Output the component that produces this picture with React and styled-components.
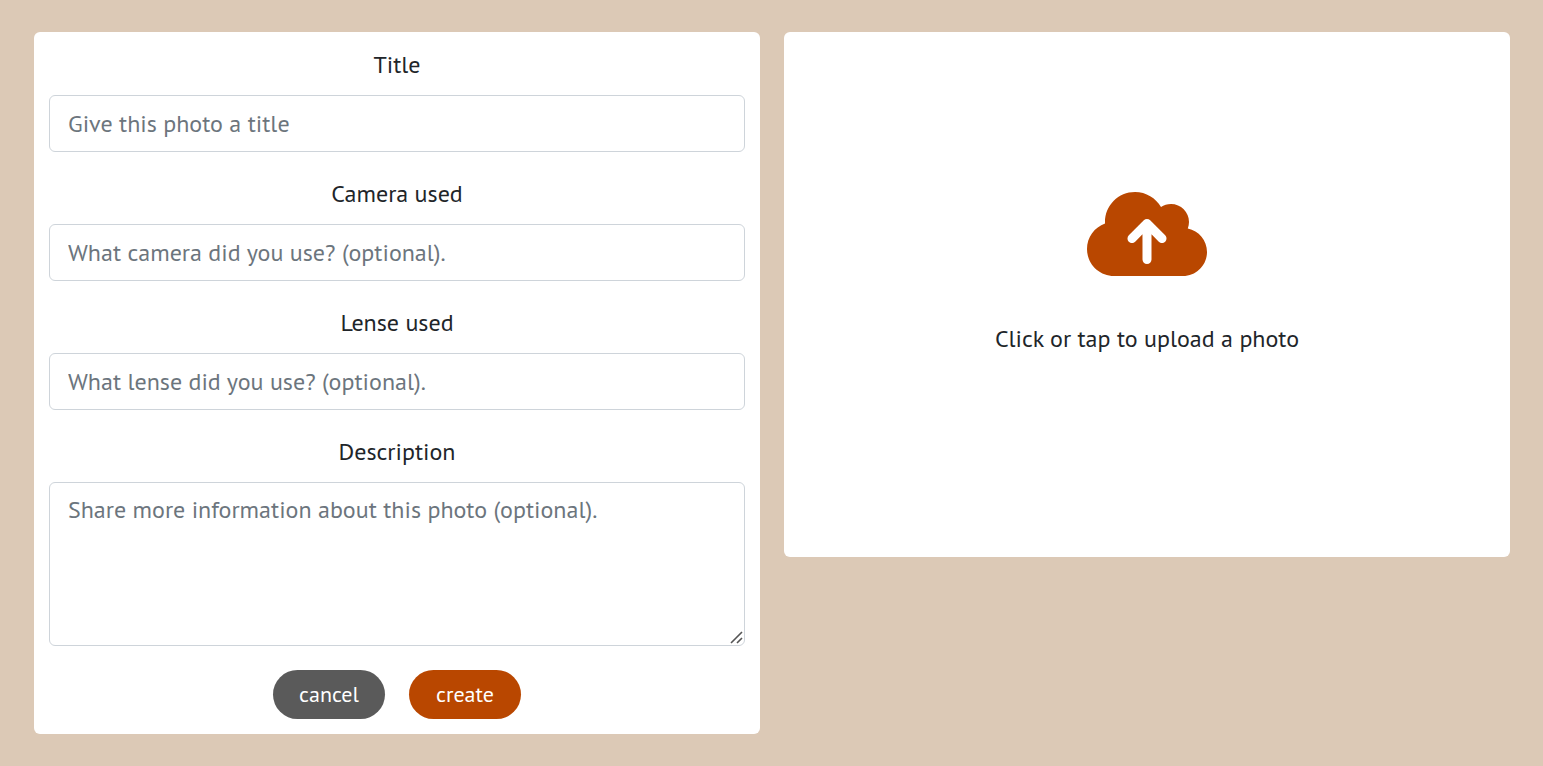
import React from "react";
import styled, { createGlobalStyle } from "styled-components";
import { FaCloudArrowUp } from "react-icons/fa6";

const GlobalStyle = createGlobalStyle`
  *, *::before, *::after { box-sizing: border-box; }
  body {
    margin: 0;
    background: #dcc9b6;
    color: #212529;
    font-family: "PT Sans", Lato, sans-serif;
    font-size: 24px;
    line-height: 36px;
  }
`;

const Page = styled.main`
  display: grid;
  grid-template-columns: repeat(2, minmax(0, 1fr));
  align-items: start;
  gap: 24px;
  padding: 32px 33px 32px 34px;
`;

const FormCard = styled.form`
  display: flex;
  flex-direction: column;
  gap: 24px;
  padding: 15px;
  border-radius: 6px;
  background: #fff;
`;

const Field = styled.div`
  position: relative;
  display: flex;
  flex-direction: column;
  gap: 12px;
  text-align: center;
`;

const TextInput = styled.input`
  display: block;
  width: 100%;
  height: 57px;
  padding: 10px 18px;
  border: 1px solid #ced4da;
  border-radius: 6px;
  background: #fff;
  color: #212529;
  font: inherit;

  &::placeholder {
    color: #6c757d;
    opacity: 1;
  }
`;

const TextArea = styled(TextInput).attrs({ as: "textarea" })`
  height: 164px;
  padding: 9px 18px;
  resize: vertical;

  &::-webkit-resizer {
    background: transparent;
  }
`;

const ResizeGrip = styled.svg`
  position: absolute;
  right: 2px;
  bottom: 2px;
  width: 13px;
  height: 13px;
  pointer-events: none;
`;

const Actions = styled.div`
  display: flex;
  justify-content: center;
  gap: 24px;
`;

const PillButton = styled.button`
  min-width: 112px;
  height: 49px;
  padding: 0 24px 2px;
  border: 0;
  border-radius: 25px;
  background: ${(p) => (p.$primary ? "#b94700" : "#5a5a5a")};
  color: #fff;
  font: inherit;
  font-size: 22px;
  cursor: pointer;
`;

const UploadCard = styled.label`
  position: relative;
  display: flex;
  flex-direction: column;
  align-items: center;
  gap: 39px;
  padding: 154px 15px 200px;
  border-radius: 6px;
  background: #fff;
  text-align: center;
  cursor: pointer;
`;

const UploadIcon = styled(FaCloudArrowUp)`
  width: 120px;
  height: 96px;
  color: #b94700;
`;

const FileInput = styled.input`
  position: absolute;
  inset: 0;
  width: 100%;
  height: 100%;
  opacity: 0;
  cursor: pointer;
`;

const fields = [
  { id: "title", label: "Title", placeholder: "Give this photo a title" },
  { id: "camera", label: "Camera used", placeholder: "What camera did you use? (optional)." },
  { id: "lense", label: "Lense used", placeholder: "What lense did you use? (optional)." },
];

export default function App() {
  return (
    <>
      <GlobalStyle />
      <Page>
        <FormCard onSubmit={(e) => e.preventDefault()}>
          {fields.map(({ id, label, placeholder }) => (
            <Field key={id}>
              <label htmlFor={id}>{label}</label>
              <TextInput id={id} name={id} type="text" placeholder={placeholder} />
            </Field>
          ))}
          <Field>
            <label htmlFor="description">Description</label>
            <TextArea
              id="description"
              name="description"
              placeholder="Share more information about this photo (optional)."
            />
            <ResizeGrip viewBox="0 0 13 13" aria-hidden="true">
              <path d="M1 12L12 1M7 12L12 7" fill="none" stroke="#555" strokeWidth="1.6" />
            </ResizeGrip>
          </Field>
          <Actions>
            <PillButton type="button">cancel</PillButton>
            <PillButton type="submit" $primary>create</PillButton>
          </Actions>
        </FormCard>
        <UploadCard>
          <UploadIcon aria-hidden="true" />
          <span>Click or tap to upload a photo</span>
          <FileInput type="file" accept="image/*" />
        </UploadCard>
      </Page>
    </>
  );
}
